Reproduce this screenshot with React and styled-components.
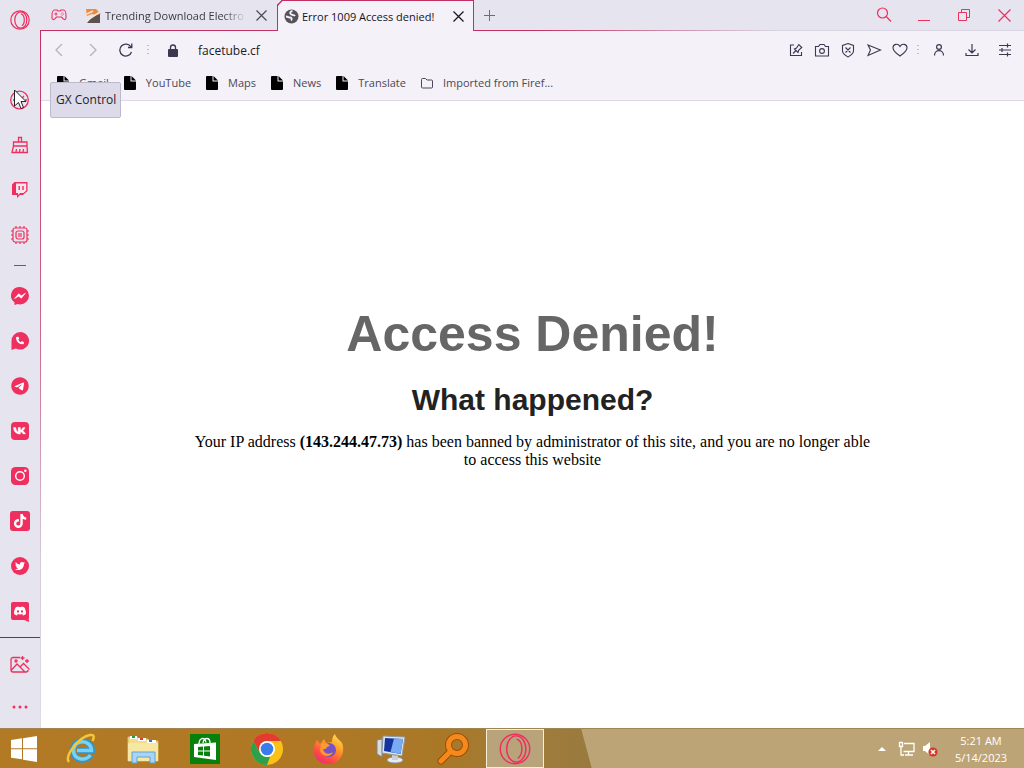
import React from 'react';
import styled, { createGlobalStyle } from 'styled-components';
import { FaVk, FaTiktok, FaTwitter, FaDiscord, FaPhone, FaTelegram } from 'react-icons/fa6';

const RED = '#ee2f5f';
const LINE = '#c03060';
const INK = '#3c3850';

const GlobalStyle = createGlobalStyle`
  * { box-sizing: border-box; }
  body {
    margin: 0;
    background: #fff;
    font-family: "Open Sans", "Noto Sans", sans-serif;
    font-size: 12px;
    color: #1c1a24;
  }
  button, input { font: inherit; color: inherit; }
`;

const Desktop = styled.div`
  min-height: 100vh;
  display: grid;
  grid-template-rows: 1fr auto;
`;

const BrowserWindow = styled.div`
  position: relative;
  display: grid;
  grid-template-columns: 40px 1fr;
`;

const Sidebar = styled.nav`
  display: flex;
  flex-direction: column;
  background: #e6e4ee;
`;

const SideButton = styled.button`
  display: flex;
  align-items: center;
  justify-content: center;
  width: 40px;
  height: ${(p) => p.$height || 45}px;
  padding: 0;
  border: 0;
  background: none;
  color: ${RED};
`;

const SideGroup = styled.div`
  display: flex;
  flex-direction: column;
  padding-top: ${(p) => p.$top || 0}px;
`;

const SideRule = styled.hr`
  width: 12px;
  height: 1px;
  margin: 8px auto 7px;
  border: 0;
  background: ${LINE};
`;

const SideFooter = styled(SideGroup)`
  margin-top: auto;
  border-top: 1px solid #4a4656;
`;

const Column = styled.div`
  display: flex;
  flex-direction: column;
  min-width: 0;
`;

const TabBar = styled.header`
  display: flex;
  height: 31px;
  background:
    linear-gradient(90deg, ${LINE} 0, ${LINE} 50%, #d9d5e2 75%) bottom / 100% 1px no-repeat,
    #e6e4ee;
`;

const BarButton = styled.button`
  display: flex;
  align-items: center;
  justify-content: center;
  flex: none;
  width: ${(p) => p.$width}px;
  height: 30px;
  padding: 0;
  border: 0;
  background: none;
  color: ${(p) => p.$color || RED};
`;

const Tab = styled.div`
  display: flex;
  align-items: center;
  width: ${(p) => (p.$active ? 197 : 199)}px;
  height: 31px;
  padding: 0 2px 0 ${(p) => (p.$active ? 6 : 8)}px;
  border: ${(p) => (p.$active ? `1px solid ${LINE}` : '0')};
  border-bottom: 0;
  border-top-left-radius: 5px;
  corner-shape: bevel;
  background: ${(p) => (p.$active ? '#f4f1f8' : 'none')};
`;

const TabTitle = styled.button`
  display: flex;
  align-items: center;
  gap: 3px;
  flex: 1;
  min-width: 0;
  height: 28px;
  padding: 0;
  border: 0;
  background: none;
  font-size: 11px;
  color: ${(p) => (p.$active ? '#15131c' : '#3b3846')};
  white-space: nowrap;
  ${(p) => !p.$active && 'mask-image: linear-gradient(90deg, #000 85%, transparent);'}

  svg { flex: none; }
`;

const Spacer = styled.div`
  flex: 1;
`;

const Content = styled.div`
  flex: 1;
  display: flex;
  flex-direction: column;
  border-left: 1px solid;
  border-image: linear-gradient(#c03060 0, #cc6a90 45%, #d6c8d8 75%, #dedbe6) 1;
`;

const Toolbar = styled.div`
  display: flex;
  align-items: center;
  height: 38px;
  padding: 0 3px 0 2px;
  background: #f4f1f8;
`;

const Dots = styled.span`
  display: flex;
  justify-content: center;
  width: ${(p) => p.$width}px;
  color: #8c889c;
`;

const LockBox = styled.span`
  display: flex;
  justify-content: center;
  width: 38px;
`;

const Address = styled.input`
  flex: 1;
  min-width: 0;
  height: 28px;
  padding: 0 0 0 6px;
  border: 0;
  outline: 0;
  background: none;
`;

const Bookmarks = styled.div`
  display: flex;
  align-items: center;
  gap: 15px;
  height: 32px;
  padding: 0 16px 4px;
  border-bottom: 1px solid #dcd8e6;
  background: #f4f1f8;
  font-size: 11px;
`;

const Bookmark = styled.a`
  display: flex;
  align-items: center;
  gap: 10px;
  color: #4b4857;
  text-decoration: none;
  white-space: nowrap;
`;

const Page = styled.main`
  flex: 1;
  padding: 204px 20px 40px;
  background: #fff;
  text-align: center;
`;

const Title = styled.h1`
  margin: 0;
  color: #666;
  font: bold 50px/58px "Liberation Sans", Arial, sans-serif;
`;

const Subtitle = styled.h2`
  margin: 19px 0 15px;
  color: #222;
  font: bold 30px/36px "Liberation Sans", Arial, sans-serif;
`;

const Message = styled.p`
  max-width: 690px;
  margin: 0 auto;
  color: #000;
  font: 16px/18px "Liberation Serif", "Times New Roman", serif;
`;

const Tooltip = styled.div`
  position: absolute;
  left: 50px;
  top: 82px;
  padding: 8px 4px 8px 5px;
  border: 1px solid #bdb9cd;
  border-radius: 2px;
  background: #dddae9;
  color: #24222e;
  line-height: 18px;
`;

const Pointer = styled.svg`
  position: absolute;
  left: 13px;
  top: 89px;
`;

const Taskbar = styled.footer`
  display: flex;
  gap: 4px;
  height: 40px;
  border-top: 1px solid #a08552;
  background:
    linear-gradient(75deg, transparent 571px, #bda476 572px),
    linear-gradient(90deg, #b37a26 0, #b07824 300px, #a97827 440px, #a07d3c 530px, #98793e 600px);
`;

const TaskButton = styled.button`
  display: flex;
  align-items: center;
  justify-content: center;
  width: ${(p) => p.$width || 58}px;
  height: 39px;
  padding: 0;
  border: ${(p) => (p.$active ? '1px solid #f7efd6' : '0')};
  background: ${(p) => (p.$active ? '#b9a37b' : 'none')};
`;

const Tray = styled.div`
  display: flex;
  align-items: center;
  margin-left: auto;
`;

const TrayButton = styled.button`
  display: flex;
  align-items: center;
  justify-content: center;
  width: 24px;
  height: 39px;
  padding: 0;
  border: 0;
  background: none;
`;

const Clock = styled.time`
  width: 82px;
  padding-right: 4px;
  color: #fff;
  font-size: 11px;
  line-height: 17px;
  text-align: center;
`;

const Stroke = ({ size = 16, width = 1, children, ...rest }) => (
  <svg width={size} height={size} viewBox={`0 0 ${size} ${size}`} fill="none" stroke="currentColor" strokeWidth={width} aria-hidden="true" {...rest}>
    {children}
  </svg>
);

const OperaRing = ({ size = 20, width = 1.2 }) => (
  <svg width={size} height={size} viewBox="0 0 20 20" fill="none" stroke={RED} strokeWidth={width} aria-hidden="true">
    <circle cx="10" cy="10" r="9.2" />
    <ellipse cx="10.800" cy="10" rx="6" ry="8.200" />
    <path d="M11 3.800c4 1 4.500 9.500.8 12" />
  </svg>
);

const Cross = ({ size = 11, width = 1.2 }) => (
  <Stroke size={size} width={width}><path d={`M.5.5l${size - 1} ${size - 1}M${size - 0.5}.5l-${size - 1} ${size - 1}`} /></Stroke>
);

const GaugeIcon = () => (
  <Stroke size={20} width={1.3}><circle cx="9.500" cy="10" r="8.800" /><path d="M10 10l4-4M15 10h2M3 10h2" /></Stroke>
);

const BroomIcon = () => (
  <Stroke size={18} width={1.3}>
    <path d="M7.500 6V1.500h3V6M2.500 6h13.500v4h-13.500zM2.500 10L1 16.500h15.500L16 10M5 16l.5-3M8.500 16l.5-3M12 16l.5-3" />
  </Stroke>
);

const TwitchIcon = () => (
  <svg width="18" height="18" viewBox="0 0 18 18" aria-hidden="true">
    <path d="M3.500 1H16.500V10L12 14H9l-3 3v-3H1V3.500z" fill={RED} />
    <path d="M5 2.500H15.200V9.500L12.500 12H9.200L7 14v-2H5z" fill="#f8e4ec" />
    <path d="M8.200 5v4M12 5v4" stroke={RED} strokeWidth="1.400" />
  </svg>
);

const ChipIcon = () => (
  <Stroke size={20} width={1.2}>
    <rect x="3" y="3" width="14" height="14" rx="2" />
    <rect x="6" y="6" width="8" height="8" rx="2" />
    <path d="M9 8v4M11 8v4M6 3V1M10 3V1M14 3V1M6 19v-2M10 19v-2M14 19v-2M1 6h2M1 10h2M1 14h2M17 6h2M17 10h2M17 14h2" />
  </Stroke>
);

const MessengerIcon = () => (
  <svg width="18" height="18" viewBox="0 0 18 18" aria-hidden="true">
    <path d="M9 0a9 8.700 0 0 1 0 17.400 10 10 0 0 1-2.300-.3L3.500 18v-2.500A8.600 8.600 0 0 1 9 0z" fill={RED} />
    <path d="M3.500 11.500L7.700 6.800l2.600 2 4.200-2.600-4.200 5-2.600-2z" fill="#fff" stroke="#fff" strokeWidth=".6" />
  </svg>
);

const WhatsAppIcon = () => (
  <svg width="18" height="18" viewBox="0 0 18 18" aria-hidden="true">
    <path d="M9.200 0a8.800 8.800 0 1 1-4.400 16.400L.5 18V9A8.800 8.800 0 0 1 9.200 0z" fill={RED} />
    <FaPhone x="5" y="4.500" size={8} color="#fff" />
  </svg>
);

const TelegramIcon = () => (
  <svg width="18" height="18" viewBox="0 0 18 18" aria-hidden="true">
    <circle cx="9" cy="9" r="8" fill="#fff" />
    <FaTelegram size={18} color={RED} />
  </svg>
);

const Badge = ({ glyph: Glyph, size = 18, inner = 13, radius = 4, tail }) => (
  <svg width={size} height={size} viewBox={`0 0 ${size} ${size}`} overflow="visible" aria-hidden="true">
    <rect width={size} height={size} rx={radius} fill={RED} />
    {tail && <path d="M12 17.500h6V20z" fill={RED} />}
    <Glyph x={(size - inner) / 2} y={(size - inner) / 2} size={inner} color="#fff" />
  </svg>
);

const VkIcon = () => (
  <svg width="18" height="18" viewBox="0 0 18 18" aria-hidden="true">
    <rect width="18" height="18" rx="4" fill={RED} />
    <path d="M2.500 5.500h2.200c.3 2.700 1.500 4 2.500 4.300V5.500h2.200v2.600c1-.2 2-1.300 2.500-2.600H14c-.3 1.500-1.400 2.700-2.300 3.200.9.400 2.100 1.400 2.800 3.300h-2.400c-.5-1.200-1.400-2-2.700-2.200V12h-.6C5.300 12 2.700 9.700 2.500 5.500z" fill="#fff" stroke="#fff" strokeWidth=".4" />
  </svg>
);

const InstagramIcon = () => (
  <svg width="18" height="18" viewBox="0 0 18 18" aria-hidden="true">
    <rect width="18" height="18" rx="4.500" fill={RED} />
    <circle cx="9" cy="9" r="4.300" fill="none" stroke="#fff" strokeWidth="1.400" />
    <circle cx="14.300" cy="3.800" r="1.200" fill="#fff" />
  </svg>
);

const GalleryIcon = () => (
  <Stroke size={20} width={1.3}>
    <path d="M10 2.500H3a2 2 0 0 0-2 2V15a2 2 0 0 0 2 2h13a2 2 0 0 0 2-2M1.500 15l5.500-6 8 8M10 12l3.500-3.500 6 6M12.500 1v4M10.500 3h4M17 4v4M15 6h4" />
    <circle cx="6" cy="6" r="1" />
  </Stroke>
);

const MoreIcon = () => (
  <svg width="16" height="4" viewBox="0 0 16 4" fill={RED} aria-hidden="true">
    <circle cx="2" cy="2" r="1.500" /><circle cx="8" cy="2" r="1.500" /><circle cx="14" cy="2" r="1.500" />
  </svg>
);

const GamepadIcon = () => (
  <Stroke size={16} width={1.1}>
    <path d="M3.500 3h2.500l1 1h2l1-1h2.500c1.500 0 2.500 3 2.500 5.500v2.300c0 2.200-2 2.200-2.800 1L10.500 10h-5l-1.700 1.800C3 13 1 13 1 10.800V8.500C1 6 2 3 3.500 3z" />
    <path d="M3.500 7h3M5 5.500v3M9.800 7h.8M12 7h.8M11.300 5.500v.8M11.300 7.800v.8" />
  </Stroke>
);

const TrendIcon = () => (
  <svg width="16" height="16" viewBox="0 0 16 16" aria-hidden="true">
    <path d="M0 1h10l5 5-4 1-5-1-5 2z" fill="#ee8a3c" /><path d="M14 6v9H1l6-7z" fill="#5c5350" />
    <path d="M0 13L14 4M1 6l6-3" stroke="#f8e6d4" strokeWidth="1.500" />
  </svg>
);

const GlobeIcon = () => (
  <svg width="15" height="15" viewBox="0 0 15 15" aria-hidden="true">
    <circle cx="7.500" cy="7.500" r="7" fill="#55535a" />
    <path d="M8.500 2C6 2.500 5.500 4 7 5.300c1.300 1 3.500.7 4 1.700M2 7.500c2 0 2.500 1 4 1s2.500 1.500 1 3" fill="none" stroke="#f4f1f8" strokeWidth="1.800" />
  </svg>
);

const FileIcon = () => (
  <svg width="12" height="14" viewBox="0 0 12 14" fill="#000" aria-hidden="true">
    <path d="M1 0h5.500v5.500H12V13a1 1 0 0 1-1 1H1a1 1 0 0 1-1-1V1a1 1 0 0 1 1-1z" /><path d="M7.500 0L12 4.500H7.500z" />
  </svg>
);

const FolderIcon = () => (
  <Stroke size={12} width={1}><path d="M.5 2.500a1 1 0 0 1 1-1h3l1.500 1.500h4.500a1 1 0 0 1 1 1V10a1 1 0 0 1-1 1h-9a1 1 0 0 1-1-1z" /></Stroke>
);

const VerticalDots = () => (
  <svg width="2" height="10" viewBox="0 0 2 10" fill="currentColor" aria-hidden="true">
    <rect width="1" height="1" x=".5" /><rect y="4" x=".5" width="1" height="1" /><rect y="8" x=".5" width="1" height="1" />
  </svg>
);

const actions = [
  ['Pinboard', <path key="p" d="M6 3H2.500v10.500h11V10M5 11.500l3-3M6.500 7l3.500 3.500.8-2.500 3-2.500-3-3L8.500 6z" />],
  ['Snapshot', <g key="s"><path d="M1.500 4.500h3l1.500-2h4l1.500 2h3v9.500h-13z" /><circle cx="8" cy="9" r="2.400" /></g>],
  ['Ad blocker', <path key="a" d="M8 1.500l5.500 2v5.500c0 3-3 4.500-5.500 6-2.500-1.500-5.500-3-5.500-6V3.500zM5.500 5.500l5 5M10.500 5.500l-5 5" />],
  ['Send page', <path key="n" d="M2 3l12.500 5L2 13.500 4.500 8z" />],
  ['Favourite', <path key="f" d="M8 14C3 10.500 1 8.500 1 5.700 1 2 6 1 8 4.500 10 1 15 2 15 5.700 15 8.500 13 10.500 8 14z" />],
];

const menus = [
  ['Profile', <g key="p"><circle cx="8" cy="5" r="2.400" /><path d="M3.500 13.500c0-6.500 9-6.500 9 0" /></g>],
  ['Downloads', <path key="d" d="M8 2v8.500M4.500 7.500L8 11l3.500-3.500M2 11V13.500h12V11" />],
  ['Easy setup', <path key="e" d="M2 3.500h12M2 8h12M2 12.500h12M10.500 1.500v4M5 6v4M10.500 10.500v4" />],
];

const bookmarks = ['Gmail', 'YouTube', 'Maps', 'News', 'Translate'];

const sideTools = [
  ['GX Control', <GaugeIcon key="g" />],
  ['GX Cleaner', <BroomIcon key="b" />],
  ['Twitch', <TwitchIcon key="t" />],
  ['Limiter', <ChipIcon key="c" />],
];

const messengers = [
  ['Messenger', <MessengerIcon key="m" />],
  ['WhatsApp', <WhatsAppIcon key="w" />],
  ['Telegram', <TelegramIcon key="t" />],
  ['VK', <VkIcon key="v" />],
  ['Instagram', <InstagramIcon key="i" />],
  ['TikTok', <Badge key="k" glyph={FaTiktok} size={20} inner={14} radius={3} />],
  ['Twitter', <Badge key="r" glyph={FaTwitter} radius={9} inner={10} />],
  ['Discord', <Badge key="d" glyph={FaDiscord} radius={2} tail />],
];

const WindowsLogo = () => (
  <svg width="28" height="28" viewBox="0 0 28 28" fill="#fff" aria-hidden="true">
    <path d="M1 5l11-1.700v10H1zM13 3.200L27 1v12.300H13zM1 14.300h11v10L1 22.700zM13 14.300h14V27l-14-2.300z" />
  </svg>
);

const ExplorerE = () => (
  <svg width="32" height="32" viewBox="0 0 32 32" fill="none" aria-hidden="true">
    <path d="M26 22c-4 7-18 7-18-5 0-12 20-12 19 1H12" stroke="#2f95cf" strokeWidth="6" />
    <path d="M25.500 22c-4 6-17 6-17-5 0-11 18-11 18 .5H12" stroke="#78d2f4" strokeWidth="3.600" />
    <path d="M4 29C-1 23 14 4 25 2c5-.8 4 3 2.500 6" stroke="#f4c738" strokeWidth="2.500" />
  </svg>
);

const FoldersIcon = () => (
  <svg width="32" height="30" viewBox="0 0 32 30" aria-hidden="true">
    <path d="M1 3h9l2 2h9l2 2h8v20H1z" fill="#f3dc8b" stroke="#d8b860" />
    <path d="M3 2h7v3H3zM11 4h8v3h-8zM20 6h9v3h-9z" fill="#fff" />
    <path d="M5 2h3v2H5z" fill="#2b9b48" /><path d="M13 4h3v2h-3z" fill="#d8402c" /><path d="M22 6h3v2h-3z" fill="#3479c0" />
    <path d="M1 9h30v18H1z" fill="#f7e7a4" />
    <path d="M5 29V18h23v11h-5v-6H10v6z" fill="#a9d5f2" stroke="#5fa2d3" />
  </svg>
);

const StoreIcon = () => (
  <svg width="30" height="30" viewBox="0 0 30 30" aria-hidden="true">
    <path fill="#08810c" d="M0 0h30v30H0z" />
    <path d="M4 10l22-1.500V26L4 23z" fill="#fff" />
    <path d="M9 10c0-6 6-8 7-1.500M13 9c1-6 7-6 7 0" fill="none" stroke="#fff" strokeWidth="1.300" />
    <path d="M8 13l5-.5v4H8zM14 12.400l6-.5v4.600h-6zM8 17.500h5v4l-5-.6zM14 17.500h6v5l-6-.8z" fill="#08810c" />
  </svg>
);

const ChromeLogo = () => (
  <svg width="34" height="34" viewBox="0 0 34 34" aria-hidden="true">
    <circle cx="17" cy="17" r="16" fill="#fbc116" />
    <path d="M3.140 9A16 16 0 0 1 30.860 9H17l-7 12z" fill="#e33b2e" />
    <path d="M3.140 9L10 21l7 4h3l-3 8A16 16 0 0 1 3.140 9z" fill="#2da04b" />
    <circle cx="17" cy="17" r="8" fill="#fff" /><circle cx="17" cy="17" r="6.300" fill="#3b7de8" />
  </svg>
);

const FirefoxLogo = () => (
  <svg width="32" height="32" viewBox="0 0 32 32" aria-hidden="true">
    <defs>
      <linearGradient id="fire" x1=".8" y1="0" x2=".2" y2="1">
        <stop offset="0" stopColor="#ffe14a" /><stop offset=".4" stopColor="#ff9328" /><stop offset=".75" stopColor="#ff4648" /><stop offset="1" stopColor="#e8287c" />
      </linearGradient>
    </defs>
    <path d="M4 7l3 4 4-5 2 4 6-1c0-4 1-6 3-8 1 4 5 6 7 9 4 9-2 21-13 21S0 24 1 15c.3-4 2-6 3-8z" fill="url(#fire)" />
    <circle cx="16" cy="17" r="7" fill="#7552c8" />
    <path d="M8 11c4-2 7-1 9 2-4 0-3 4-7 3 1 5 6 6 10 3-2 6-12 5-13-2z" fill="#ff9a2e" />
  </svg>
);

const MonitorIcon = () => (
  <svg width="32" height="30" viewBox="0 0 32 30" aria-hidden="true">
    <path d="M2 6l5-1v18l-5-3z" fill="#d9dde2" stroke="#7b858f" />
    <path d="M8 2l22 1-3 19L7 19z" fill="#dfe6ec" stroke="#8c98a5" />
    <path d="M10 4l18 1-2.500 15L9 17z" fill="#1434a0" /><path d="M19 4.500l9 .5-2.500 15-10-2z" fill="#7aaaf0" />
    <ellipse cx="20" cy="26" rx="8" ry="3" fill="#e8ecef" stroke="#8c98a5" /><path d="M17 21l6 1v4h-6z" fill="#c8d0d8" />
  </svg>
);

const KeyMagnifier = () => (
  <svg width="32" height="32" viewBox="0 0 32 32" fill="none" strokeLinecap="round" aria-hidden="true">
    <path d="M13 19L4 28" stroke="#a34a08" strokeWidth="7" /><circle cx="20" cy="12" r="8.500" stroke="#a34a08" strokeWidth="7" />
    <path d="M13 19L4 28" stroke="#f58a1c" strokeWidth="5" /><circle cx="20" cy="12" r="8.500" stroke="#f58a1c" strokeWidth="5" />
  </svg>
);

const apps = [
  ['Internet Explorer', <ExplorerE key="e" />],
  ['File Explorer', <FoldersIcon key="f" />],
  ['Store', <StoreIcon key="s" />],
  ['Chrome', <ChromeLogo key="c" />],
  ['Firefox', <FirefoxLogo key="x" />],
  ['Remote desktop', <MonitorIcon key="m" />],
  ['Search tool', <KeyMagnifier key="k" />],
];

export default function App() {
  return (
    <Desktop>
      <GlobalStyle />
      <BrowserWindow>
        <Sidebar>
          <SideButton $height={40} aria-label="Opera menu"><OperaRing /></SideButton>
          <SideGroup $top={37}>
            {sideTools.map(([name, icon]) => <SideButton key={name} aria-label={name}>{icon}</SideButton>)}
          </SideGroup>
          <SideRule />
          <SideGroup>
            {messengers.map(([name, icon]) => <SideButton key={name} aria-label={name}>{icon}</SideButton>)}
          </SideGroup>
          <SideFooter $top={6}>
            <SideButton $height={42} aria-label="Wallpaper"><GalleryIcon /></SideButton>
            <SideButton $height={42} aria-label="More"><MoreIcon /></SideButton>
          </SideFooter>
        </Sidebar>
        <Column>
          <TabBar>
            <BarButton $width={38} aria-label="GX Corner"><GamepadIcon /></BarButton>
            <Tab>
              <TabTitle><TrendIcon />Trending Download Electro</TabTitle>
              <BarButton $width={28} $color="#4b4857" aria-label="Close tab"><Cross /></BarButton>
            </Tab>
            <Tab $active>
              <TabTitle $active><GlobeIcon />Error 1009 Access denied!</TabTitle>
              <BarButton $width={26} $color="#15131c" aria-label="Close tab"><Cross /></BarButton>
            </Tab>
            <BarButton $width={30} aria-label="New tab">
              <Stroke size={11}><path d="M5.500 0v11M0 5.500h11" /></Stroke>
            </BarButton>
            <Spacer />
            <BarButton $width={40} aria-label="Search tabs">
              <Stroke size={16} width={1.2}><circle cx="6.500" cy="6" r="5" /><path d="M10.200 9.500L15 14.500" /></Stroke>
            </BarButton>
            <BarButton $width={40} aria-label="Minimize"><Stroke size={12}><path d="M0 11.500h12" /></Stroke></BarButton>
            <BarButton $width={40} aria-label="Restore"><Stroke size={12}><path d="M.5 3.500h8v8h-8zM3.500 3.500v-3h8v8h-3" /></Stroke></BarButton>
            <BarButton $width={40} aria-label="Close"><Cross size={13} /></BarButton>
          </TabBar>
          <Content>
            <Toolbar>
              <BarButton $width={33} $color="#b5b2be" aria-label="Back"><Stroke size={12} width={1.3}><path d="M8 0L2 6l6 6" /></Stroke></BarButton>
              <BarButton $width={33} $color="#b5b2be" aria-label="Forward"><Stroke size={12} width={1.3}><path d="M3 0l6 6-6 6" /></Stroke></BarButton>
              <BarButton $width={33} $color={INK} aria-label="Reload">
                <Stroke size={14} width={1.3}><path d="M12.500 9A6 6 0 1 1 12 4M12.800.5V4.500H9" /></Stroke>
              </BarButton>
              <Dots $width={12}><VerticalDots /></Dots>
              <LockBox>
                <svg width="10" height="13" viewBox="0 0 10 13" aria-hidden="true">
                  <rect y="5" width="10" height="8" rx="1" fill={INK} /><path d="M2.500 5V3.500a2.500 2.500 0 0 1 5 0V5" fill="none" stroke={INK} strokeWidth="1.300" />
                </svg>
              </LockBox>
              <Address aria-label="Address" defaultValue="facetube.cf" />
              {actions.map(([name, shape]) => (
                <BarButton key={name} $width={26} $color={INK} aria-label={name}><Stroke width={1.1}>{shape}</Stroke></BarButton>
              ))}
              <Dots $width={9}><VerticalDots /></Dots>
              {menus.map(([name, shape]) => (
                <BarButton key={name} $width={33} $color={INK} aria-label={name}><Stroke width={1.2}>{shape}</Stroke></BarButton>
              ))}
            </Toolbar>
            <Bookmarks>
              {bookmarks.map((name) => <Bookmark key={name} href="#"><FileIcon />{name}</Bookmark>)}
              <Bookmark href="#"><FolderIcon />Imported from Firef...</Bookmark>
            </Bookmarks>
            <Page>
              <Title>Access Denied!</Title>
              <Subtitle>What happened?</Subtitle>
              <Message>
                Your IP address <b>(143.244.47.73)</b> has been banned by administrator of this site, and you are no longer able to access this website
              </Message>
            </Page>
          </Content>
        </Column>
        <Tooltip role="tooltip">GX Control</Tooltip>
        <Pointer width="14" height="21" viewBox="0 0 14 21" aria-hidden="true">
          <path d="M1.500 1v16l4-3.500 2.500 6 2.500-1-2.500-6H13z" fill="#fff" stroke="#222" />
        </Pointer>
      </BrowserWindow>
      <Taskbar>
        <TaskButton $width={48} aria-label="Start"><WindowsLogo /></TaskButton>
        {apps.map(([name, icon]) => <TaskButton key={name} aria-label={name}>{icon}</TaskButton>)}
        <TaskButton $active aria-label="Opera GX"><OperaRing size={32} width={0.9} /></TaskButton>
        <Tray>
          <TrayButton aria-label="Show hidden icons"><svg width="8" height="4" viewBox="0 0 8 4"><path d="M4 0l4 4H0z" fill="#fff" /></svg></TrayButton>
          <TrayButton aria-label="Network">
            <svg width="17" height="16" viewBox="0 0 17 16" fill="none" stroke="#fff" strokeWidth="1.300" aria-hidden="true">
              <path d="M6 2.500h10v8H5.500M10.500 10.500v3M7 14h8M3 6v8h3M1.500 1.500h3v4h-3z" />
            </svg>
          </TrayButton>
          <TrayButton aria-label="Volume muted">
            <svg width="16" height="16" viewBox="0 0 16 16" aria-hidden="true">
              <path d="M1 5h2l5-4v13l-5-4H1z" fill="#fff" /><circle cx="11" cy="11" r="4.600" fill="#cf3a2c" /><path d="M9 9l4 4M13 9l-4 4" stroke="#fff" strokeWidth="1.500" />
            </svg>
          </TrayButton>
          <Clock>5:21 AM<br />5/14/2023</Clock>
        </Tray>
      </Taskbar>
    </Desktop>
  );
}
